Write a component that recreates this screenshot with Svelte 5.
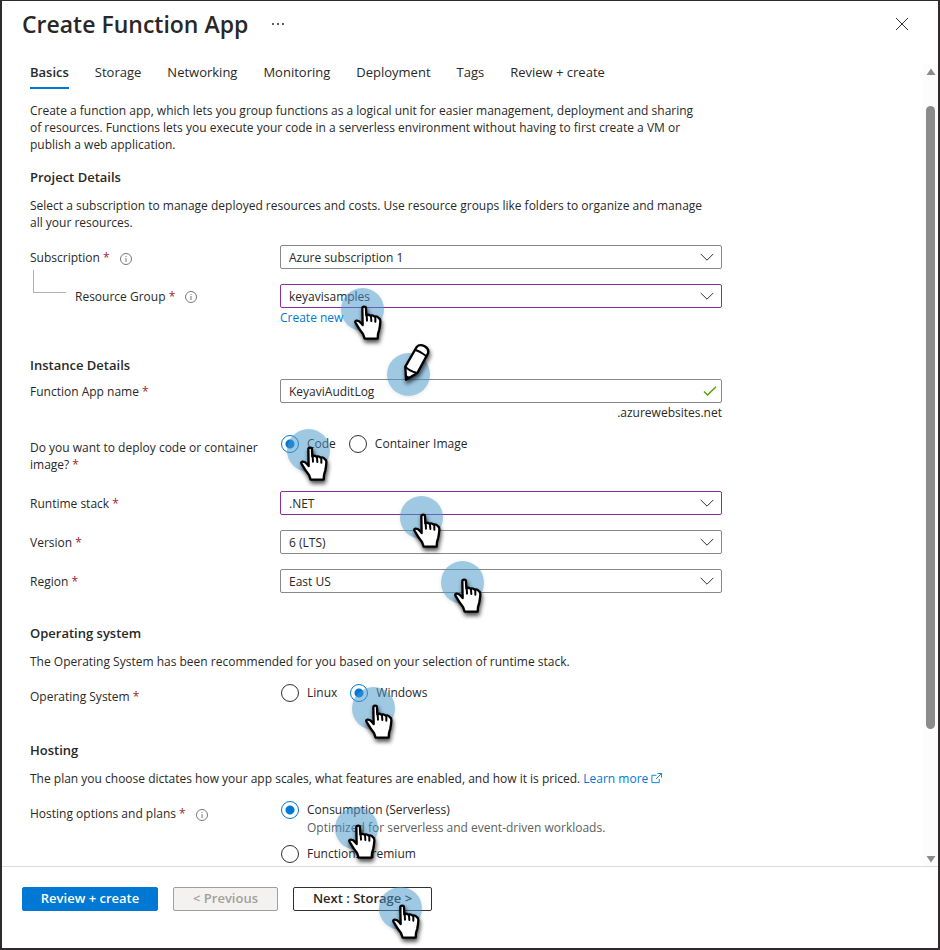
<script>
  const tabs = ['Basics', 'Storage', 'Networking', 'Monitoring', 'Deployment', 'Tags', 'Review + create'];
  let activeTab = $state('Basics');
  let appName = $state('KeyaviAuditLog');
  let deploy = $state('code');
  let os = $state('windows');
  let plan = $state('consumption');
</script>

{#snippet hand(place)}
  <span class="pin {place}" aria-hidden="true">
    <svg viewBox="0 0 126 180" width="42" height="60">
      <path class="outline" d="M64 61Q64 56 69.500 56Q75 56 75 61L76 82Q82 78 88 83Q96 80 101 86Q109 83 114 91Q119 94 118 102Q117 113 115 124L111 138L110 152L71 152L66 138Q56 126 45 107Q40 99 46 98Q54 97 60 105L65 111Z" />
      <path class="crease" d="M77 82L78 98M90 85L91 99M103 88L103 101" />
    </svg>
  </span>
{/snippet}

{#snippet info()}
  <svg class="info" viewBox="0 0 12 12" width="12" height="12" role="img" aria-label="More information">
    <circle cx="6" cy="6" r="5.500" />
    <path d="M6 5v4M6 3v1" />
  </svg>
{/snippet}

{#snippet chevron()}
  <svg class="chevron" viewBox="0 0 14 8" width="14" height="8" aria-hidden="true"><path d="M.7.900L7 7.200L13.300.900" /></svg>
{/snippet}

<div class="blade">
  <header>
    <h1>Create Function App</h1>
    <button class="more" aria-label="More actions">
      <svg viewBox="0 0 12 2" width="12" height="2"><path d="M0 0h2v2H0zM5 0h2v2H5zM10 0h2v2h-2z" /></svg>
    </button>
    <button class="close" aria-label="Close">
      <svg viewBox="0 0 12 12" width="12" height="12"><path d="M0 0L12 12M12 0L0 12" /></svg>
    </button>
  </header>

  <div class="middle">
    <main>
      <nav>
        {#each tabs as tab}
          <button class:active={tab === activeTab} onclick={() => (activeTab = tab)}>{tab}</button>
        {/each}
      </nav>

      <p>Create a function app, which lets you group functions as a logical unit for easier management, deployment and sharing of resources. Functions lets you execute your code in a serverless environment without having to first create a VM or publish a web application.</p>

      <section class="project">
        <h2>Project Details</h2>
        <p>Select a subscription to manage deployed resources and costs. Use resource groups like folders to organize and manage all your resources.</p>
        <div class="row">
          <label for="subscription">Subscription <b>*</b>{@render info()}</label>
          <div class="field">
            <select id="subscription"><option>Azure subscription 1</option></select>
            {@render chevron()}
          </div>
        </div>
        <div class="row">
          <label for="group" class="nested"><i></i><span>Resource Group <b>*</b></span>{@render info()}</label>
          <div class="field">
            <select id="group" class="edited"><option>keyavisamples</option></select>
            {@render chevron()}
            <a class="under" href="#new">Create new</a>
            {@render hand('at-group')}
          </div>
        </div>
      </section>

      <section class="instance">
        <h2>Instance Details</h2>
        <div class="row">
          <label for="name">Function App name <b>*</b></label>
          <div class="field">
            <input id="name" type="text" bind:value={appName} />
            <svg class="check" viewBox="0 0 14 10" width="14" height="10" aria-hidden="true"><path d="M1 5.500L4.500 9L13 .700" /></svg>
            <span class="suffix">.azurewebsites.net</span>
            <span class="pin at-name" aria-hidden="true">
              <svg viewBox="0 0 126 180" width="42" height="60">
                <path class="outline" d="M57 80L55 41L89 -18Q98 -28 113 -20Q127 -12 123 1L91 60Z" />
                <path class="crease" d="M84 -9Q98 -6 117 9M55 41Q66 54 91 60" />
                <path class="lead" d="M56 66L70 73L57 82Z" />
              </svg>
            </span>
          </div>
        </div>
        <div class="row options" role="radiogroup" aria-labelledby="deploy-label">
          <span class="caption" id="deploy-label">Do you want to deploy code or container image? <b>*</b></span>
          <div class="field choices">
            <label><input type="radio" name="deploy" value="code" bind:group={deploy} />Code</label>
            <label><input type="radio" name="deploy" value="container" bind:group={deploy} />Container Image</label>
            {@render hand('at-code')}
          </div>
        </div>
        <div class="row">
          <label for="stack">Runtime stack <b>*</b></label>
          <div class="field">
            <select id="stack" class="edited"><option>.NET</option></select>
            {@render chevron()}
            {@render hand('at-stack')}
          </div>
        </div>
        <div class="row">
          <label for="version">Version <b>*</b></label>
          <div class="field">
            <select id="version"><option>6 (LTS)</option></select>
            {@render chevron()}
          </div>
        </div>
        <div class="row">
          <label for="region">Region <b>*</b></label>
          <div class="field">
            <select id="region"><option>East US</option></select>
            {@render chevron()}
            {@render hand('at-region')}
          </div>
        </div>
      </section>

      <section class="system">
        <h2>Operating system</h2>
        <p>The Operating System has been recommended for you based on your selection of runtime stack.</p>
        <div class="row options" role="radiogroup" aria-labelledby="os-label">
          <span class="caption" id="os-label">Operating System <b>*</b></span>
          <div class="field choices">
            <label><input type="radio" name="os" value="linux" bind:group={os} />Linux</label>
            <label><input type="radio" name="os" value="windows" bind:group={os} />Windows</label>
            {@render hand('at-windows')}
          </div>
        </div>
      </section>

      <section class="hosting">
        <h2>Hosting</h2>
        <p>
          The plan you choose dictates how your app scales, what features are enabled, and how it is priced.
          <a href="#learn">Learn more
            <svg class="external" viewBox="0 0 12 12" width="11" height="11" aria-hidden="true"><path d="M6 2.500H1v8h8V6.500M7 .500h4.500V5M11.500.500L5.500 6.500" /></svg></a>
        </p>
        <div class="row options" role="radiogroup" aria-labelledby="plan-label">
          <span class="caption" id="plan-label">Hosting options and plans <b>*</b>{@render info()}</span>
          <div class="field plans">
            <label><input type="radio" name="plan" value="consumption" bind:group={plan} /><span>Consumption (Serverless)<small>Optimized for serverless and event-driven workloads.</small></span></label>
            <label><input type="radio" name="plan" value="premium" bind:group={plan} /><span>Functions Premium</span></label>
            {@render hand('at-plan')}
          </div>
        </div>
      </section>
    </main>
    <div class="scrollbar" aria-hidden="true">
      <svg viewBox="0 0 10 8" width="10" height="8"><path d="M5 .500L9.500 7H.5Z" /></svg>
      <div class="track"><div class="thumb"></div></div>
      <svg viewBox="0 0 10 8" width="10" height="8"><path d="M5 7.500L9.500 1H.5Z" /></svg>
    </div>
  </div>

  <footer>
    <button class="primary">Review + create</button>
    <button class="previous" disabled>&lt; Previous</button>
    <button class="next">Next : Storage &gt;{@render hand('at-next')}</button>
  </footer>
</div>

<style>
  :global(body) { margin: 0; }
  .blade {
    box-sizing: border-box;
    height: 100vh;
    display: flex;
    flex-direction: column;
    border: 2px solid #2f2a2e;
    border-top-width: 1px;
    background: #fff;
    color: #292827;
    font: 12px/17px "Segoe UI", "Open Sans", sans-serif;
  }
  button, input, select { font: inherit; color: inherit; margin: 0; box-sizing: border-box; }
  button { cursor: pointer; }
  header { display: flex; align-items: center; height: 46px; padding: 0 30px 0 20px; flex: none; }
  h1 { margin: 0; font-size: 23px; line-height: 32px; font-weight: 600; }
  header button { border: 0; background: none; padding: 0; display: flex; }
  .more { margin-left: 24px; fill: #605e5c; }
  .close { margin-left: auto; }
  .close svg { stroke: #323130; stroke-width: 1; overflow: visible; }

  .middle { flex: 1; min-height: 0; display: flex; padding-top: 17px; }
  main { flex: 1; min-width: 0; overflow-y: auto; scrollbar-width: none; padding-left: 28px; }
  nav { display: flex; gap: 26px; margin-bottom: 13px; }
  nav button { border: 0; border-bottom: 2px solid transparent; background: none; padding: 0 0 6px; font-size: 13px; white-space: nowrap; }
  nav button.active { font-weight: 600; border-color: #0078d4; }
  p, h2 { margin: 0; max-width: 676px; }
  h2 { font-size: 13px; line-height: 17px; font-weight: 600; margin-bottom: 11px; }
  section p { margin-bottom: 14px; }
  a { color: #0078d4; text-decoration: none; }
  b { color: #a4262c; font-weight: 400; }

  .project { margin-top: 16px; }
  .instance { margin-top: 31px; }
  .system { margin-top: 32px; }
  .instance h2 { margin-bottom: 5px; }
  .hosting { margin-top: 37px; }

  .row { display: flex; max-width: 692px; margin-bottom: 15px; }
  .row > label, .caption { flex: 0 0 250px; box-sizing: border-box; padding: 4px 10px 0 0; }
  .row:last-child { margin-bottom: 0; }
  .options { margin-bottom: 18px; }
  .field { position: relative; flex: 1; min-width: 0; }
  .info { margin-left: 10px; vertical-align: -3px; fill: none; stroke: #797775; stroke-width: 1; flex: none; }
  .nested { display: flex; align-items: flex-start; }
  .nested i { width: 32px; height: 22px; margin: -18px 9px 0 3px; border: solid #b3b0ad; border-width: 0 0 1px 1px; }
  .nested .info { margin-top: 3px; }
  select, .field > input {
    display: block;
    width: 100%;
    height: 24px;
    padding: 0 28px 0 8px;
    border: 1px solid #8a8886;
    border-radius: 2px;
    background: #fff;
    appearance: none;
    outline: none;
  }
  select.edited { border-color: #8a2da5; }
  .chevron, .check { position: absolute; right: 8px; top: 8px; fill: none; stroke: #323130; pointer-events: none; }
  .check { right: 5px; top: 7px; stroke: #57a300; stroke-width: 1.500; }
  .under { display: block; margin-top: 1px; }
  .suffix { display: block; margin-top: 2px; line-height: 15px; text-align: right; }

  .choices { display: flex; align-items: flex-start; gap: 12px; }
  .choices label, .plans label { display: flex; gap: 8px; line-height: 18px; }
  .plans label { margin-bottom: 8px; }
  small { display: block; font-size: 12px; color: #605e5c; }
  input[type="radio"] {
    appearance: none;
    flex: none;
    width: 18px;
    height: 18px;
    margin-left: 1px;
    border: 1px solid #323130;
    border-radius: 50%;
    background: #fff;
  }
  input[type="radio"]:checked { border-color: #0078d4; background: radial-gradient(circle, #0078d4 4px, #fff 5px); }
  .external { fill: none; stroke: #0078d4; vertical-align: -1px; }

  .scrollbar { width: 15px; flex: none; background: #fcfcfc; display: flex; flex-direction: column; align-items: center; justify-content: space-between; padding: 4px 0 3px; box-sizing: border-box; fill: #8b8b8b; }
  .track { flex: 1; width: 9px; padding: 30px 0 16px; }
  .thumb { height: 85%; border-radius: 5px; background: #8b8b8b; }

  footer { flex: none; display: flex; gap: 15px; padding: 20px 20px 37px; border-top: 1px solid #dcdbda; }
  footer button { position: relative; height: 24px; padding: 0 0 2px; border: 1px solid #323130; border-radius: 2px; background: #fff; font-size: 13px; font-weight: 600; }
  footer .primary { width: 136px; background: #0078d4; border-color: #0078d4; color: #fff; }
  footer .previous { width: 105px; background: #f3f2f1; border-color: #a19f9d; color: #a19f9d; cursor: default; }
  footer .next { width: 139px; }

  /* Tutorial markers that float over the form */
  .pin { position: absolute; z-index: 2; width: 43px; height: 43px; border-radius: 50%; background: rgba(70, 150, 201, 0.52); box-shadow: 0 1px 4px rgba(0, 0, 0, 0.1); pointer-events: none; }
  .pin svg { display: block; overflow: visible; filter: drop-shadow(1px 3px 2px rgba(0, 0, 0, 0.7)); }
  .outline { fill: #fff; stroke: #000; stroke-width: 7; stroke-linejoin: round; }
  .crease { fill: none; stroke: #000; stroke-width: 6; stroke-linecap: round; }
  .lead { fill: #000; }
  .at-group { left: 61px; top: 4px; }
  .at-name { left: 107px; top: -26px; }
  .at-code { left: 7px; top: -6px; }
  .at-stack { left: 120px; top: 5px; }
  .at-region { left: 161px; top: -8px; }
  .at-windows { left: 72px; top: 3px; }
  .at-plan { left: 55px; top: 6px; }
  .at-next { left: 85px; top: -1px; }
</style>
